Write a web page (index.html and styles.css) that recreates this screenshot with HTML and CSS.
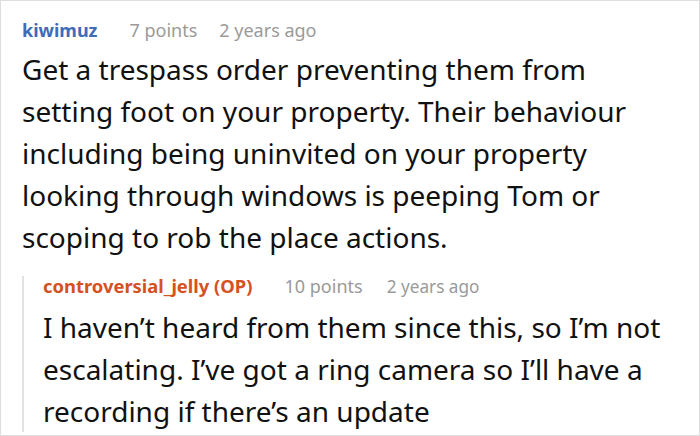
FILE: index.html
```html
<!DOCTYPE html>
<html>
<head>
<meta charset="utf-8">
<link rel="stylesheet" href="styles.css">
</head>
<body>
<div class="frame">
  <div class="comment">
    <div class="meta">
      <span class="user">kiwimuz</span>
      <span class="info">7 points</span>
      <span class="info">2 years ago</span>
    </div>
    <p class="text">Get a trespass order preventing them from setting foot on your property. Their behaviour including being uninvited on your property looking through windows is peeping Tom or scoping to rob the place actions.</p>
  </div>
  <div class="reply">
    <div class="meta">
      <span class="user op">controversial_jelly (OP)</span>
      <span class="info">10 points</span>
      <span class="info">2 years ago</span>
    </div>
    <p class="text">I haven’t heard from them since this, so I’m not escalating. I’ve got a ring camera so I’ll have a recording if there’s an update</p>
  </div>
</div>
</body>
</html>
```

FILE: styles.css
```css
html, body {
  margin: 0;
  padding: 0;
  background: #fff;
}
.frame {
  box-sizing: border-box;
  width: 700px;
  height: 436px;
  border: 1px solid #dedede;
  padding: 16px 20px 0 21px;
  font-family: "Noto Sans", sans-serif;
  color: #111;
  overflow: hidden;
}
.meta {
  display: flex;
  gap: 22px;
  font-size: 18px;
  line-height: 26px;
  align-items: baseline;
}
.user {
  font-weight: 700;
  color: #3d6cb9;
  margin-right: 10px;
}
.user.op {
  color: #d5521f;
  font-size: 18.4px;
  margin-right: 8px;
}
.info {
  color: #9a9a9a;
}
.reply .info:last-child {
  font-size: 17.2px;
}
.text {
  margin: 5px 0 0 0;
  font-size: 28px;
  line-height: 42px;
}
.reply {
  margin-top: 18px;
  border-left: 2px solid #e2e2e2;
  padding-left: 19px;
}
.reply .meta {
  line-height: 20px;
  gap: 24px;
}
.reply .text {
  margin-top: 9px;
  margin-bottom: -14px;
}
```
